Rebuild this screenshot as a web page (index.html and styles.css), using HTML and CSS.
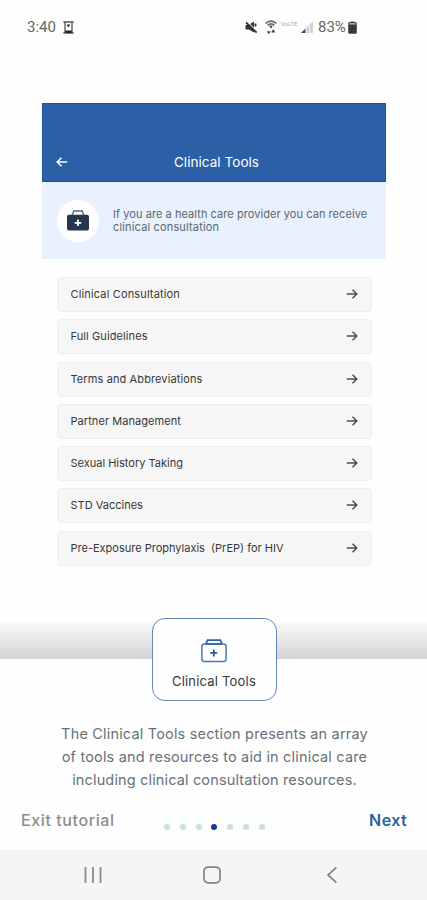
FILE: index.html
```html
<!DOCTYPE html>
<html lang="en">
<head>
<meta charset="utf-8">
<meta name="viewport" content="width=device-width, initial-scale=1">
<title>Clinical Tools</title>
<link rel="stylesheet" href="styles.css">
</head>
<body>
<svg width="0" height="0" class="defs">
  <symbol id="arrow" viewBox="0 0 12 12"><path d="M.8 6h10M6.5 1.7 10.8 6l-4.3 4.3" fill="none" stroke="currentColor" stroke-width="1.5"/></symbol>
</svg>
<div class="phone">
  <header class="status">
    <div class="status-left">
      <span class="time">3:40</span>
      <svg width="11" height="13" viewBox="0 0 11 13"><path d="M.3 1h10.4M.3 12h10.4M2 1v11M9 1v11" fill="none" stroke="#555" stroke-width="1.3"/><path d="M2.3 9.5h6.4V12H2.3zM4 3.5h3.4L5 6.8z" fill="#222"/></svg>
    </div>
    <div class="status-right">
      <svg width="13" height="13" viewBox="0 0 13 13"><path d="M.5 4h3L9 .6v11L4 8.4H.5z" fill="#333"/><path d="m1.4 0 11 11" stroke="#fefefe" stroke-width="1.3"/><path d="m1 1.3 10.6 10.3M10.5 2.5v3" stroke="#333" stroke-width="1.8"/></svg>
      <svg class="wifi" width="12" height="15" viewBox="0 0 12 15"><path d="M.7 3.4Q6-1.2 11.3 3.4M2.6 5.4Q6 2.4 9.4 5.4" fill="none" stroke="#666" stroke-width="1.8"/><path d="M4.2 6.2Q6 5 7.8 6.2L6 8.5zM1.8 11.3h4L3.8 14.3zM6.2 12.5h4.2L8.3 9z" fill="#444"/></svg>
      <span class="volte">VoLTE</span>
      <svg class="signal" width="12" height="12" viewBox="0 0 12 12"><path d="M12 0v12H0z" fill="#d2d2d2"/><path d="M4.5 7.5V12H0z" fill="#444"/><path d="M5 5v7M8.5 2v10" stroke="#f4f4f4" stroke-width=".8"/></svg>
      <span class="percent">83%</span>
      <svg class="battery" width="9" height="13" viewBox="0 0 9 13"><path d="M3 0h3v2H3z" fill="#999"/><rect x=".2" y="1" width="8.6" height="11.8" rx="1.5" fill="#3b3b3b"/><path d="M1.2 2h6.6v1.6H1.2z" fill="#aaa"/></svg>
    </div>
  </header>

  <main class="preview">
    <div class="appbar">
      <svg class="back" width="12" height="12"><use href="#arrow"/></svg>
      <h1>Clinical Tools</h1>
    </div>
    <div class="notice">
      <div class="avatar">
        <svg width="22" height="21" viewBox="0 0 22 21"><path d="M5 5.5 6.8 1h8.4L17 5.5" fill="none" stroke="#5e6978" stroke-width="1.4"/><rect x="0" y="4.7" width="22" height="15.8" rx="2" fill="#253650"/><path d="M11 9.5v6.6M7.7 12.8h6.6" stroke="#fff" stroke-width="1.8"/></svg>
      </div>
      <p><span class="n1">If you are a health care provider you can receive</span><br><span class="n2">clinical consultation</span></p>
    </div>
    <ul class="list">
      <li><span class="r1">Clinical Consultation</span><svg width="12" height="12"><use href="#arrow"/></svg></li>
      <li><span class="r2">Full Guidelines</span><svg width="12" height="12"><use href="#arrow"/></svg></li>
      <li><span class="r3">Terms and Abbreviations</span><svg width="12" height="12"><use href="#arrow"/></svg></li>
      <li><span class="r4">Partner Management</span><svg width="12" height="12"><use href="#arrow"/></svg></li>
      <li><span class="r5">Sexual History Taking</span><svg width="12" height="12"><use href="#arrow"/></svg></li>
      <li><span class="r6">STD Vaccines</span><svg width="12" height="12"><use href="#arrow"/></svg></li>
      <li><span class="r7">Pre-Exposure Prophylaxis&nbsp; (PrEP) for HIV</span><svg width="12" height="12"><use href="#arrow"/></svg></li>
    </ul>
  </main>

  <section class="sheet">
    <div class="feature">
      <svg width="26" height="24" viewBox="0 0 26 24"><path d="M4.6 5.5 6.5 1.2h12.8l1.9 4.3" fill="none" stroke="#2c62a6" stroke-width="1.7"/><rect x=".9" y="5" width="24.2" height="17.5" rx="2.4" fill="none" stroke="#4c79b1" stroke-width="1.5"/><path d="M4.8 5h16.4" stroke="#2c62a6" stroke-width="1.6"/><path d="M12.8 10.4v7M9.3 13.9h7" stroke="#285a9b" stroke-width="1.8"/></svg>
      <span>Clinical Tools</span>
    </div>
    <p class="copy"><span class="c1">The Clinical Tools section presents an array</span><br><span class="c2">of tools and resources to aid in clinical care</span><br><span class="c3">including clinical consultation resources.</span></p>
    <div class="actions">
      <span class="exit">Exit tutorial</span>
      <div class="dots"><i></i><i></i><i></i><i class="on"></i><i></i><i></i><i></i></div>
      <span class="next">Next</span>
    </div>
  </section>

  <nav class="nav">
    <svg width="18" height="18" viewBox="0 0 18 18"><path d="M1.5 1v16M9 1v16M16.5 1v16" stroke="#8b8b8b" stroke-width="1.8"/></svg>
    <svg width="18" height="18" viewBox="0 0 18 18"><rect x="1" y="1.2" width="16" height="15.6" rx="4" fill="none" stroke="#828282" stroke-width="1.7"/></svg>
    <svg width="18" height="18" viewBox="0 0 18 18"><path d="M13.4 1.4 5 9l8.4 7.6" fill="none" stroke="#828282" stroke-width="1.7"/></svg>
  </nav>
</div>
</body>
</html>
```
FILE: styles.css
```css
* { box-sizing: border-box; }
body { margin: 0; background: #fefefe; font-family: Inter, "Liberation Sans", sans-serif; }
h1, p, ul { margin: 0; padding: 0; font-weight: 400; }
svg { display: block; flex: none; }
.defs { display: none; }
.phone { width: 427px; height: 900px; display: flex; flex-direction: column; overflow: hidden; }

.status { height: 103px; padding: 17px 70px 0 27px; display: flex; justify-content: space-between; align-items: flex-start; color: #666; font-family: Roboto, sans-serif; }
.status-left, .status-right { display: flex; align-items: center; height: 20px; }
.time { width: 36px; font-size: 15px; }
.wifi { margin-left: 7px; }
.volte { width: 17px; margin: -7px 0 0 4px; font-size: 6px; color: #aaa; }
.signal { margin-left: 3px; }
.percent { width: 30px; margin-left: 5px; font-size: 15px; }

.preview { width: 344px; height: 519px; margin-left: 42px; }
.appbar { height: 79px; padding: 38px 15px 0 13px; display: grid; grid-template-columns: 12px 1fr 5px; align-items: center; background: #2b5fa6; border: 1px solid #1d519d; color: #fff; }
.appbar h1 { text-align: center; font-size: 13.5px; letter-spacing: .05px; white-space: nowrap; }
.back { transform: rotate(180deg); }
.notice { height: 77px; padding-left: 15px; display: flex; align-items: center; gap: 14px; background: #e8f1fd; color: #5f6670; }
.avatar { width: 42px; height: 42px; border-radius: 50%; background: #fff; display: grid; place-items: center; }
.notice p { font-size: 11px; line-height: 12.5px; white-space: nowrap; }
.n1 { letter-spacing: .06px; }
.n2 { letter-spacing: .16px; }
.list { list-style: none; padding: 18px 14px 0 15px; display: grid; gap: 7.3px; }
.list li { height: 35px; padding: 0 13px 0 12.5px; border: 1px solid #efefef; border-radius: 4px; background: #f6f6f6; display: flex; align-items: center; justify-content: space-between; color: #383838; font-size: 11px; white-space: nowrap; }
.list span { margin-top: -1px; }
.list svg { color: #4d4d58; margin-top: -1px; }
.r1 { letter-spacing: .15px; }
.r2 { letter-spacing: .1px; }
.r3 { letter-spacing: .11px; }
.r4 { letter-spacing: .06px; }

.sheet { height: 228px; display: flex; flex-direction: column; align-items: center; background: linear-gradient(#fafafa, #d4d4d4) 0 0 / 100% 37px no-repeat; }
.feature { width: 125px; height: 83px; margin: -4px 0 0 1px; padding-top: 20px; border: 1px solid #6288b9; border-radius: 13px; background: #fefefe; display: flex; flex-direction: column; align-items: center; gap: 10px; color: #383838; font-size: 13px; letter-spacing: .2px; line-height: 16px; }
.copy { margin: 21px 0 0 2px; color: #69717a; font-size: 14.5px; line-height: 23px; text-align: center; white-space: nowrap; }
.c1, .c2 { letter-spacing: .18px; }
.c3 { letter-spacing: .15px; }
.actions { width: 100%; height: 32px; margin-top: 13px; padding: 0 20px 0 21px; display: grid; grid-template-columns: 143px 101px 1fr; font-size: 16px; line-height: 32px; }
.exit { color: #8d8d8d; font-weight: 500; letter-spacing: .6px; }
.dots { padding-top: 14px; display: flex; justify-content: space-between; align-items: center; }
.dots i { width: 6px; height: 6px; border-radius: 50%; background: #c6e2dc; }
.dots .on { background: #123f94; }
.next { text-align: right; color: #2b619f; font-weight: 600; letter-spacing: .4px; }
.nav { flex: 1; background: #f5f5f5; display: flex; justify-content: space-between; align-items: center; padding: 0 86px 0 83.5px; }
```
